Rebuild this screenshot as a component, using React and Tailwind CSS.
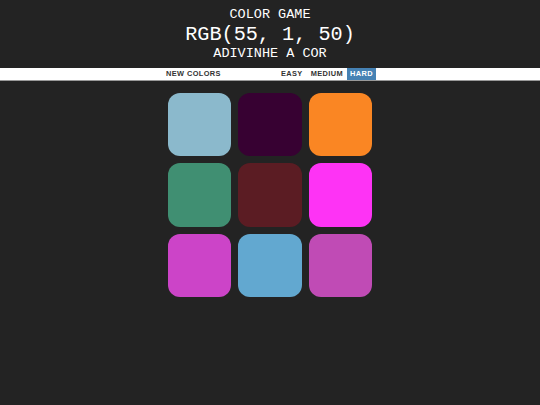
import { useState } from "react";

const colors = [
  "rgb(139, 185, 204)",
  "rgb(55, 1, 50)",
  "rgb(250, 134, 35)",
  "rgb(64, 143, 114)",
  "rgb(91, 28, 35)",
  "rgb(254, 51, 245)",
  "rgb(204, 68, 200)",
  "rgb(98, 168, 208)",
  "rgb(192, 75, 181)",
];

export default function App() {
  const [mode, setMode] = useState("hard");

  return (
    <div className="min-h-[405px] w-[540px] bg-[#232323] font-['Liberation_Mono',monospace]">
      <div className="flex flex-col items-center pt-[7px] pb-[6px] text-white">
        <h1 className="text-[13.5px] leading-[16px] font-normal">COLOR GAME</h1>
        <div className="text-[20.2px] leading-[22px] mt-[1px]">RGB(55, 1, 50)</div>
        <div className="text-[13.5px] leading-[16px]">ADIVINHE A COR</div>
      </div>

      <div className="bg-white border-b border-[#9a9a9a] h-[13px]">
        <div className="w-[212px] mx-auto h-full flex items-center font-['Liberation_Sans',Arial,sans-serif] font-bold text-[7.4px] tracking-[0.4px] text-[#333]">
          <button className="px-[2px] h-full uppercase">New Colors</button>
          <span className="flex-1" />
          <button
            onClick={() => setMode("easy")}
            className={`px-[4px] h-full uppercase ${mode === "easy" ? "bg-[#4682b4] text-white" : ""}`}
          >
            Easy
          </button>
          <button
            onClick={() => setMode("medium")}
            className={`px-[4px] h-full uppercase ${mode === "medium" ? "bg-[#4682b4] text-white" : ""}`}
          >
            Medium
          </button>
          <button
            onClick={() => setMode("hard")}
            className={`px-[3px] h-full uppercase ${mode === "hard" ? "bg-[#4682b4] text-white" : ""}`}
          >
            Hard
          </button>
        </div>
      </div>

      <div className="w-[212px] mx-auto mt-[8px] flex flex-wrap">
        {colors.map((c, i) => (
          <div key={i} className="w-[63.6px] h-[63.6px] m-[3.5px] rounded-[12px]" style={{ background: c }} />
        ))}
      </div>
    </div>
  );
}
